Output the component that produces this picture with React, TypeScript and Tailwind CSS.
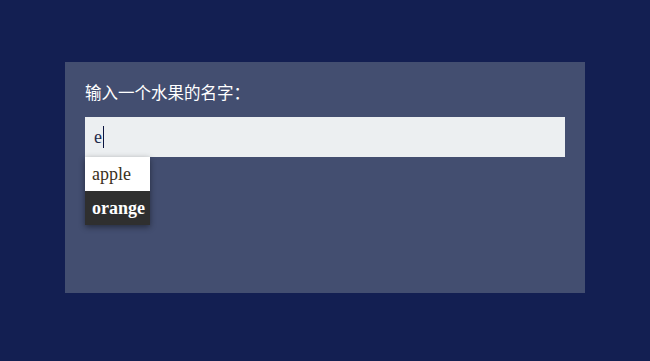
import React from 'react';

const fruits = [
    { name: 'apple', active: false },
    { name: 'orange', active: true },
];

const App: React.FC = () => {
    return (
        <div className="min-h-screen w-full bg-[#131f52] pt-[62px] pl-[65px]">
            <div className="w-[520px] h-[231px] bg-[#434e70] px-5 pt-[19px]">
                <p className="text-[16.5px] leading-[22px] text-white font-['Noto_Sans_CJK_SC',sans-serif]">
                    输入一个水果的名字：
                </p>
                <div className="mt-[14px] relative">
                    <div className="h-10 w-[480px] bg-[#eceff1] flex items-center pl-[9px] font-['Liberation_Serif',serif] text-[18px] text-[#1f2a4a]">
                        <span>e</span>
                        <span className="w-px h-[22px] bg-[#0b1440] ml-px" />
                    </div>
                    <ul className="absolute left-0 top-10 w-[65px] shadow-[0_2px_6px_rgba(0,0,0,0.45)] font-['Liberation_Serif',serif] text-[18px]">
                        {fruits.map(f => (
                            <li
                                key={f.name}
                                className={f.active
                                    ? 'h-[34px] leading-[34px] px-[7px] bg-[#2f2f2f] text-white font-bold'
                                    : 'h-[34px] leading-[34px] px-[7px] bg-white text-[#3a3020]'}
                            >
                                {f.name}
                            </li>
                        ))}
                    </ul>
                </div>
            </div>
        </div>
    );
};

export default App;
